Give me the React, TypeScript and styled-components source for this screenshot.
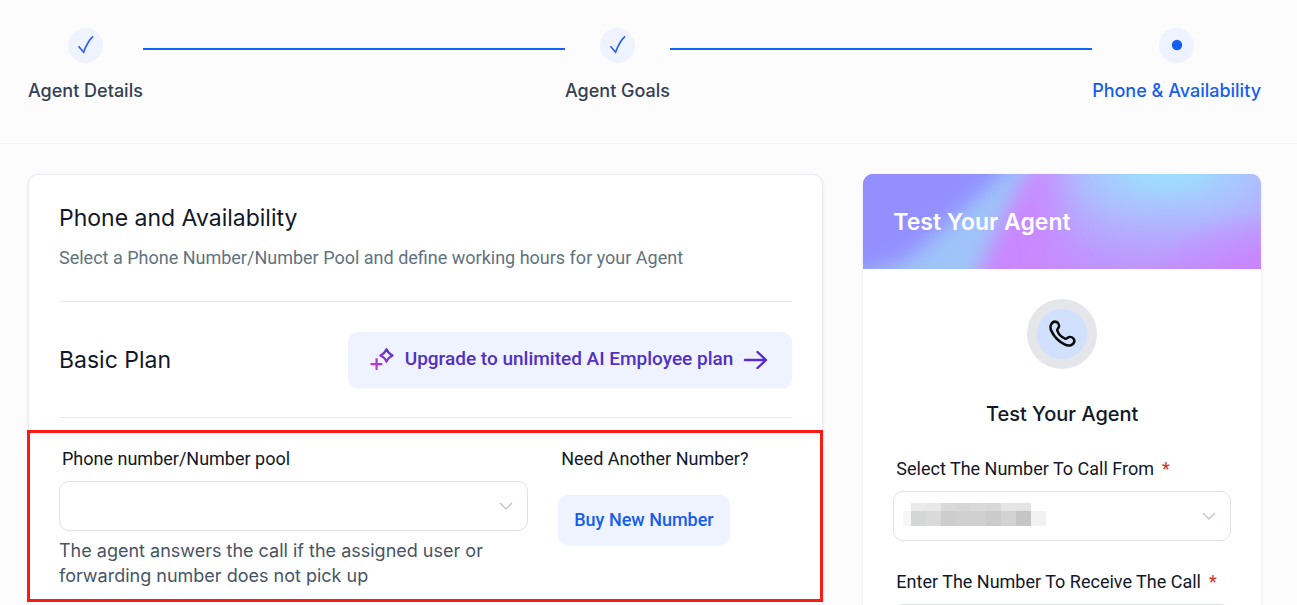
import React from "react";
import styled, { createGlobalStyle } from "styled-components";

const inter = `Inter, "Liberation Sans", sans-serif`;
const roboto = `Roboto, "Liberation Sans", sans-serif`;

const GlobalStyle = createGlobalStyle`
  *, *::before, *::after { box-sizing: border-box; }
  html { scrollbar-width: none; }
  body {
    margin: 0;
    background: #fcfcfd;
    color: #101828;
    font-family: ${roboto};
    font-size: 18px;
    line-height: 26px;
  }
  h1, h2, h3, p, ol { margin: 0; padding: 0; }
`;

const StepBar = styled.ol`
  display: flex;
  align-items: flex-start;
  list-style: none;
  height: 144px;
  padding: 28px 36px 0 28px;
  border-bottom: 1px solid #f0f4f6;
`;

const Step = styled.li<{ $current?: boolean }>`
  display: flex;
  flex-direction: column;
  align-items: center;
  gap: 15px;
  font-family: ${inter};
  font-weight: 500;
  color: ${(p) => (p.$current ? "#155eef" : "#344054")};
`;

const StepMark = styled.span`
  display: flex;
  width: 35px;
  height: 35px;
  border-radius: 50%;
  background: #eff3ff;
`;

const StepLine = styled.li`
  flex: 1;
  height: 2px;
  margin-top: 20px;
  background: #1463f4;
`;

const Columns = styled.main`
  display: grid;
  grid-template-columns: minmax(0, 2fr) minmax(0, 1fr);
  gap: 40px;
  padding: 30px 36px 30px 28px;
`;

const Card = styled.section`
  background: #fff;
  border: 1px solid #eaecf0;
  border-radius: 10px;
  box-shadow: 0 1px 3px rgba(16, 24, 40, 0.1);
`;

const SettingsCard = styled(Card)`
  padding: 28px 30px 60px;
`;

const Title = styled.h2`
  font-family: ${inter};
  font-size: 23px;
  font-weight: 400;
  line-height: 30px;
`;

const Subtitle = styled.p`
  margin: 12px 0 30px;
  color: #5f737f;
`;

const Divider = styled.hr`
  height: 1px;
  width: 100%;
  margin: 0;
  border: 0;
  background: #e8ebef;
`;

const PlanRow = styled.div`
  display: flex;
  align-items: center;
  justify-content: space-between;
  padding: 30px 0 29px;
`;

const SoftButton = styled.button`
  display: inline-flex;
  align-items: center;
  height: 50px;
  padding: 0 16px;
  border: 0;
  border-radius: 10px;
  background: #eff3ff;
  color: #155eef;
  font: 500 18px/26px ${roboto};
  white-space: nowrap;
  cursor: pointer;
  box-shadow: 0 1px 2px rgba(16, 24, 40, 0.04);
`;

const UpgradeButton = styled(SoftButton)`
  gap: 10px;
  height: 56px;
  padding: 0 24px 2px 22px;
  color: #5230c4;
  font-size: 19px;
`;

const HighlightedRow = styled.div`
  display: grid;
  grid-template-columns: minmax(0, 469fr) minmax(0, 234fr);
  column-gap: 30px;
  margin: 12px -31px 0 -32px;
  padding: 13px 28px 11px 29px;
  border: 3px solid #fb1a14;
`;

const Field = styled.div`
  display: flex;
  flex-direction: column;
  align-items: flex-start;
`;

const Label = styled.label`
  padding-left: 3px;
`;

const Required = styled.span`
  margin-left: 8px;
  color: #d92d20;
`;

const SelectBox = styled.div`
  position: relative;
  width: 100%;
  margin-top: 9px;
`;

const Select = styled.select`
  display: block;
  appearance: none;
  width: 100%;
  height: 50px;
  padding: 0 40px 0 16px;
  border: 1px solid #dfe1e7;
  border-radius: 10px;
  background: #fff;
  color: inherit;
  font: inherit;
`;

const TextInput = styled.input`
  width: 100%;
  height: 50px;
  margin-top: 9px;
  padding: 0 16px;
  border: 1px solid #dfe1e7;
  border-radius: 10px;
  background: #fff;
  font: inherit;
`;

const Chevron = styled.svg`
  position: absolute;
  top: 20px;
  right: 15px;
  pointer-events: none;
`;

const Masked = styled.svg`
  position: absolute;
  top: 12px;
  left: 10px;
  pointer-events: none;
`;

const Hint = styled.p`
  margin-top: 7px;
  font-family: ${inter};
  line-height: 25px;
  max-width: 440px;
  color: #475467;
`;

const NumberPrompt = styled.p`
  padding-left: 3px;
  margin-bottom: 23px;
`;

const TestCard = styled(Card)`
  border: 0;
  overflow: hidden;
`;

const Banner = styled.header`
  position: relative;
  height: 95px;
  padding: 32px 30px;
`;

const BannerArt = styled.svg`
  position: absolute;
  inset: 0;
  width: 100%;
  height: 100%;
`;

const BannerTitle = styled.h2`
  position: relative;
  color: #fff;
  font: 600 23px/32px ${inter};
`;

const TestBody = styled.div`
  display: flex;
  flex-direction: column;
  padding: 30px;
`;

const CallBadge = styled.span`
  display: flex;
  align-items: center;
  justify-content: center;
  align-self: center;
  width: 70px;
  height: 70px;
  border: 10px solid #e4e6ea;
  border-radius: 50%;
  background: #d1e0ff;
`;

const TestHeading = styled.h3`
  margin: 30px 0 27px;
  font: 500 20px/30px ${inter};
  text-align: center;
`;

const TestField = styled(Field)`
  margin-bottom: 28px;
`;

const CheckIcon = () => (
  <svg width="35" height="35" viewBox="0 0 35 35" fill="none" stroke="#2a61f0" strokeWidth="1.7" aria-hidden="true">
    <path d="M10.5 18.2 L15.6 24.2 Q19.5 13.5 25 8.4" />
  </svg>
);

const DotIcon = () => (
  <svg width="35" height="35" viewBox="0 0 35 35" aria-hidden="true">
    <circle cx="18" cy="17" r="5.2" fill="#155eef" />
  </svg>
);

const ChevronIcon = () => (
  <Chevron width="14" height="10" viewBox="0 0 14 10" fill="none" stroke="#c0c3c9" strokeWidth="1.3" aria-hidden="true">
    <path d="M1 2 L7 8 L13 2" />
  </Chevron>
);

const SparkleIcon = () => (
  <svg width="25" height="26" viewBox="0 0 25 26" fill="none" aria-hidden="true">
    <defs>
      <linearGradient id="sparkle" x1="22" y1="2" x2="4" y2="24" gradientUnits="userSpaceOnUse">
        <stop stopColor="#4a32c0" />
        <stop offset="0.5" stopColor="#8a35d0" />
        <stop offset="1" stopColor="#d438e8" />
      </linearGradient>
    </defs>
    <g stroke="url(#sparkle)" strokeWidth="2.2">
      <path d="M16.5 3.2 Q18.2 7.6 22.6 9.4 Q18.2 11.2 16.5 15.6 Q14.8 11.2 10.4 9.4 Q14.8 7.6 16.5 3.2 Z" strokeLinejoin="round" />
      <path d="M6.6 12.2 V24 M0.6 18.2 H12.4" />
    </g>
  </svg>
);

const ArrowIcon = () => (
  <svg width="25" height="20" viewBox="0 0 25 20" fill="none" stroke="#5b2ccb" strokeWidth="2.4" strokeLinecap="round" strokeLinejoin="round" aria-hidden="true">
    <path d="M2 11 H23 M14.5 3 L23 11 L14.5 19" />
  </svg>
);

const PhoneIcon = () => (
  <svg width="28" height="28" viewBox="0 0 28 28" fill="none" stroke="#0a0a0a" strokeWidth="2.5" strokeLinejoin="round" aria-hidden="true">
    <path d="M3.2 4.4 C4.4 2.2 6.6 1.2 8.6 2 C10.4 2.8 11.5 5.2 10.8 7.2 C10.4 8.5 9 9 9.2 10.4 C10.4 13.9 13.8 17.4 17.4 18.8 C18.9 19 19.4 17.6 20.7 17.1 C22.8 16.4 25.2 17.6 26 19.4 C26.8 21.4 25.8 23.6 23.6 24.8 C21.4 26 19 25.6 16.6 24.4 C11 21.6 6.2 16.8 3.6 11.4 C2.4 9 2 6.6 3.2 4.4 Z" />
  </svg>
);

const topRow = ["#eaeaea", "#e8e8e8", "#d9d9d9", "#d6d6d6", "#dadada", "#d8d8d8", "#e6e6e6", "#e4e4e4"];
const bottomRow = ["#d5d6d6", "#dadada", "#cdcdcd", "#cfd0d0", "#d0d0d0", "#cbcbcb", "#d1d3d3", "#c5c5c6"];

const MaskedNumber = () => (
  <Masked width="143" height="23" viewBox="0 0 143 23" shapeRendering="crispEdges" aria-hidden="true">
    <rect x="0" y="8" width="8" height="15" fill="#f6f6f6" />
    {topRow.map((fill, i) => (
      <rect key={`t${i}`} x={8 + i * 15} y="0" width="15" height="8" fill={fill} />
    ))}
    {bottomRow.map((fill, i) => (
      <rect key={`b${i}`} x={8 + i * 15} y="8" width="15" height="15" fill={fill} />
    ))}
    <rect x="128" y="8" width="15" height="15" fill="#f2f2f2" />
  </Masked>
);

const BannerBackground = () => (
  <BannerArt viewBox="0 0 398 95" preserveAspectRatio="none" aria-hidden="true">
    <defs>
      <filter id="soft" filterUnits="userSpaceOnUse" x="-140" y="-140" width="680" height="380" colorInterpolationFilters="sRGB">
        <feGaussianBlur stdDeviation="10" />
      </filter>
      <filter id="softer" filterUnits="userSpaceOnUse" x="-140" y="-140" width="680" height="380" colorInterpolationFilters="sRGB">
        <feGaussianBlur stdDeviation="20" />
      </filter>
      <radialGradient id="sky" cx="0.5" cy="0.5" r="0.5">
        <stop stopColor="#9fdeff" />
        <stop offset="0.14" stopColor="#a0d8ff" />
        <stop offset="0.4" stopColor="#abc4ff" stopOpacity="0.85" />
        <stop offset="0.7" stopColor="#b5aaff" stopOpacity="0.6" />
        <stop offset="1" stopColor="#c095ff" stopOpacity="0" />
      </radialGradient>
      <radialGradient id="orchid" cx="0.5" cy="0.5" r="0.5">
        <stop stopColor="#ca82ff" />
        <stop offset="1" stopColor="#ca82ff" stopOpacity="0" />
      </radialGradient>
    </defs>
    <rect width="398" height="95" fill="#c193ff" />
    <ellipse cx="305" cy="-4" rx="240" ry="116" fill="url(#sky)" />
    <ellipse cx="402" cy="102" rx="120" ry="64" fill="url(#orchid)" />
    <path d="M100 -110 H182 Q196 30 206 200 H60 Z" fill="#ca88ff" filter="url(#softer)" />
    <path d="M-110 -110 H244 Q126 26 92 180 H-110 Z" fill="#9fc4f9" filter="url(#soft)" />
    <path d="M-110 -110 H248 Q116 26 40 88 L-110 130 Z" fill="#938fff" filter="url(#soft)" />
  </BannerArt>
);

export default function App() {
  return (
    <>
      <GlobalStyle />
      <StepBar>
        <Step>
          <StepMark><CheckIcon /></StepMark>
          Agent Details
        </Step>
        <StepLine aria-hidden="true" />
        <Step>
          <StepMark><CheckIcon /></StepMark>
          Agent Goals
        </Step>
        <StepLine aria-hidden="true" />
        <Step $current aria-current="step">
          <StepMark><DotIcon /></StepMark>
          Phone &amp; Availability
        </Step>
      </StepBar>
      <Columns>
        <SettingsCard>
          <Title>Phone and Availability</Title>
          <Subtitle>Select a Phone Number/Number Pool and define working hours for your Agent</Subtitle>
          <Divider />
          <PlanRow>
            <Title as="h3">Basic Plan</Title>
            <UpgradeButton type="button">
              <SparkleIcon />
              Upgrade to unlimited AI Employee plan
              <ArrowIcon />
            </UpgradeButton>
          </PlanRow>
          <Divider />
          <HighlightedRow>
            <Field>
              <Label htmlFor="pool">Phone number/Number pool</Label>
              <SelectBox>
                <Select id="pool" />
                <ChevronIcon />
              </SelectBox>
              <Hint>The agent answers the call if the assigned user or forwarding number does not pick up</Hint>
            </Field>
            <Field>
              <NumberPrompt>Need Another Number?</NumberPrompt>
              <SoftButton type="button">Buy New Number</SoftButton>
            </Field>
          </HighlightedRow>
        </SettingsCard>
        <TestCard>
          <Banner>
            <BannerBackground />
            <BannerTitle>Test Your Agent</BannerTitle>
          </Banner>
          <TestBody>
            <CallBadge><PhoneIcon /></CallBadge>
            <TestHeading>Test Your Agent</TestHeading>
            <TestField>
              <Label htmlFor="from">Select The Number To Call From<Required>*</Required></Label>
              <SelectBox>
                <Select id="from" required />
                <MaskedNumber />
                <ChevronIcon />
              </SelectBox>
            </TestField>
            <TestField>
              <Label htmlFor="to">Enter The Number To Receive The Call<Required>*</Required></Label>
              <TextInput id="to" type="tel" required />
            </TestField>
          </TestBody>
        </TestCard>
      </Columns>
    </>
  );
}
